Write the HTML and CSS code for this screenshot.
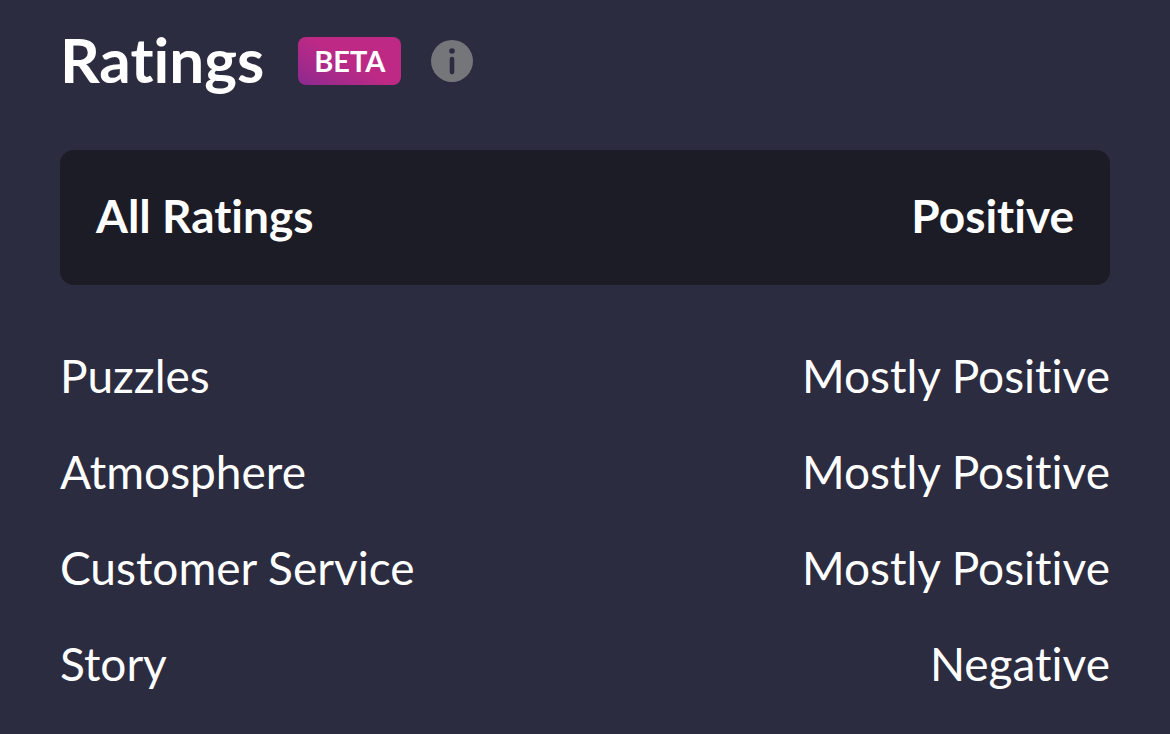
FILE: index.html
```html
<!DOCTYPE html>
<html lang="en">
<head>
<meta charset="UTF-8">
<meta name="viewport" content="width=device-width, initial-scale=1.0">
<title>Ratings</title>
<link rel="stylesheet" href="styles.css">
</head>
<body>
  <section class="ratings">
    <header class="ratings-header">
      <h1>Ratings</h1>
      <span class="badge">BETA</span>
      <button class="info" type="button" aria-label="About ratings">
        <svg viewBox="0 0 42 42" width="42" height="42" aria-hidden="true">
          <circle cx="21" cy="21" r="21" fill="#75767a"/>
          <circle cx="21" cy="11" r="2.8" fill="#2c2c40"/>
          <rect x="18.7" y="16.8" width="4.6" height="17.6" rx="2.3" fill="#2c2c40"/>
        </svg>
      </button>
    </header>

    <div class="summary">
      <span>All Ratings</span>
      <span>Positive</span>
    </div>

    <dl class="rating-list">
      <div class="rating-row">
        <dt>Puzzles</dt>
        <dd>Mostly Positive</dd>
      </div>
      <div class="rating-row">
        <dt>Atmosphere</dt>
        <dd>Mostly Positive</dd>
      </div>
      <div class="rating-row">
        <dt>Customer Service</dt>
        <dd>Mostly Positive</dd>
      </div>
      <div class="rating-row">
        <dt>Story</dt>
        <dd>Negative</dd>
      </div>
    </dl>
  </section>
</body>
</html>
```
FILE: styles.css
```css
* {
  box-sizing: border-box;
}

body {
  margin: 0;
  background-color: #2c2c40;
  color: #fff;
  font-family: "Avenir Next", Avenir, Lato, sans-serif;
  font-variant-ligatures: none;
}

.ratings {
  padding: 25px 60px;
}

/* Title, badge and info button */
.ratings-header {
  display: flex;
  align-items: center;
  gap: 30px;
}

.ratings-header h1 {
  margin: 0;
  padding: 0 4px 4px 0;
  font-size: 62px;
  font-weight: 700;
  line-height: 68px;
}

.badge {
  padding: 0 16px;
  border-radius: 8px;
  background: linear-gradient(30deg, #8c2a90, #bd2985 50%);
  font-size: 29px;
  font-weight: 700;
  line-height: 48px;
}

.info {
  display: flex;
  padding: 0;
  border: 0;
  border-radius: 50%;
  background: none;
  cursor: pointer;
}

/* Overall rating */
.summary {
  display: flex;
  justify-content: space-between;
  margin-top: 53px;
  padding: 35px 36px 38px;
  border-radius: 14px;
  background-color: #1c1c27;
  font-size: 46px;
  font-weight: 700;
  line-height: 62px;
}

/* Rating per category */
.rating-list {
  display: grid;
  gap: 32px;
  margin: 59px 0 0;
}

.rating-row {
  display: flex;
  justify-content: space-between;
  font-size: 46px;
  line-height: 64px;
}

.rating-row dd {
  margin: 0;
}
```
